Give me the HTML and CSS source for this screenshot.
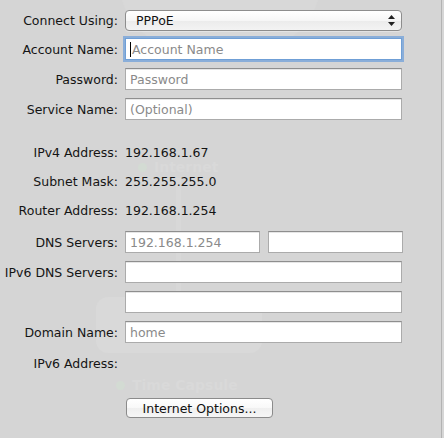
FILE: index.html
```html
<!DOCTYPE html>
<html>
<head>
<meta charset="utf-8">
<link rel="stylesheet" href="styles.css">
</head>
<body>
<div class="pane">
  <div class="ghost">
    <div class="ghost-disc"></div>
    <div class="ghost-line"></div>
    <div class="ghost-box"></div>
    <div class="ghost-text g1"><span class="gdot"></span>Internet</div>
    <div class="ghost-text g2"><span class="gdot"></span>Time Capsule</div>
  </div>

  <div class="form">
    <div class="row r-popup">
      <div class="label">Connect Using:</div>
      <div class="popup">
        <span class="popup-text">PPPoE</span>
        <svg class="arrows" width="7" height="11" viewBox="0 0 7 11"><path d="M3.5 0 L7 4 L0 4 Z" fill="#222"/><path d="M0 7 L7 7 L3.5 11 Z" fill="#222"/></svg>
      </div>
    </div>

    <div class="row r-first">
      <div class="label">Account Name:</div>
      <div class="field focus"><span class="caret"></span><span class="ph">Account Name</span></div>
    </div>
    <div class="row r-field">
      <div class="label">Password:</div>
      <div class="field"><span class="ph">Password</span></div>
    </div>
    <div class="row r-field">
      <div class="label">Service Name:</div>
      <div class="field"><span class="ph">(Optional)</span></div>
    </div>

    <div class="row r-static r-after-fields">
      <div class="label">IPv4 Address:</div>
      <div class="value">192.168.1.67</div>
    </div>
    <div class="row r-static">
      <div class="label">Subnet Mask:</div>
      <div class="value">255.255.255.0</div>
    </div>
    <div class="row r-static">
      <div class="label">Router Address:</div>
      <div class="value">192.168.1.254</div>
    </div>

    <div class="row r-dns">
      <div class="label">DNS Servers:</div>
      <div class="pair">
        <div class="field half"><span class="ph">192.168.1.254</span></div>
        <div class="field half"></div>
      </div>
    </div>
    <div class="row r-field">
      <div class="label">IPv6 DNS Servers:</div>
      <div class="field"></div>
    </div>
    <div class="row r-field">
      <div class="label"></div>
      <div class="field"></div>
    </div>
    <div class="row r-field">
      <div class="label">Domain Name:</div>
      <div class="field"><span class="ph">home</span></div>
    </div>

    <div class="row r-static r-ipv6">
      <div class="label">IPv6 Address:</div>
      <div class="value"></div>
    </div>

    <div class="row r-button">
      <div class="label"></div>
      <div class="button">Internet Options...</div>
    </div>
  </div>
</div>
<div class="edge"></div>
</body>
</html>
```
FILE: styles.css
```css
html, body {
  margin: 0;
  padding: 0;
  height: 100%;
}
body {
  display: flex;
  background: #d6d6d6;
  font-family: "DejaVu Sans", "Lucida Grande", sans-serif;
  font-size: 12.5px;
  color: #141414;
  overflow: hidden;
}
.pane {
  position: relative;
  width: 441px;
  height: 438px;
  background: #d5d5d5;
}
.edge {
  width: 1px;
  height: 438px;
  background: #b3b3b3;
}

/* faint decorative backdrop */
.ghost {
  position: absolute;
  inset: 0;
  pointer-events: none;
}
.ghost-disc {
  position: absolute;
  left: 120px;
  top: -90px;
  width: 200px;
  height: 150px;
  border-radius: 50%;
  background: #d8d8d8;
}
.ghost-line {
  position: absolute;
  left: 176px;
  top: 178px;
  width: 5px;
  height: 118px;
  background: #d8d8d8;
}
.ghost-box {
  position: absolute;
  left: 96px;
  top: 297px;
  width: 166px;
  height: 56px;
  border-radius: 12px;
  background: #d9d9d9;
}
.ghost-text {
  position: absolute;
  font-size: 14px;
  line-height: 14px;
  font-weight: bold;
  color: #d9d9d9;
  display: flex;
  align-items: center;
  gap: 7px;
}
.gdot {
  width: 9px;
  height: 9px;
  border-radius: 50%;
  background: #d3dbd3;
}
.g1 { left: 138px; top: 160px; }
.g2 { left: 116px; top: 378px; }

.form {
  position: relative;
  display: flex;
  flex-direction: column;
  padding-top: 10px;
}
.row {
  display: flex;
  align-items: center;
  gap: 7px;
  height: 22px;
}
.label {
  width: 118px;
  flex: none;
  text-align: right;
  white-space: nowrap;
}
.r-popup { height: 21px; }
.r-first { margin-top: 7px; }
.r-field { margin-top: 8px; }
.r-after-fields { margin-top: 21px; }
.r-static { height: 16px; }
.r-after-fields { margin-top: 24px; }
.r-static + .r-static { margin-top: 13px; }
.r-dns { margin-top: 13px; }
.r-ipv6 { margin-top: 12px; }
.r-button { margin-top: 27px; height: 20px; }

.popup {
  box-sizing: border-box;
  width: 277px;
  height: 21px;
  border: 1px solid #8d8d8d;
  border-radius: 4px;
  background: linear-gradient(#ffffff, #f6f6f6 50%, #ebebeb 51%, #f3f3f3);
  display: flex;
  align-items: center;
  justify-content: space-between;
  padding: 0 6px 0 10px;
  box-shadow: 0 1px 0 rgba(255,255,255,0.35);
}
.popup-text { color: #111; }
.arrows { display: block; }

.field {
  box-sizing: border-box;
  width: 277px;
  height: 22px;
  background: #fff;
  border: 1px solid #ababab;
  border-top-color: #8e8e8e;
  box-shadow: inset 0 1px 0 #e6e6e6;
  display: flex;
  align-items: center;
  padding-left: 4px;
  font-size: 12.5px;
}
.field.focus {
  border-color: #6f9fd6;
  box-shadow: 0 0 0 2px rgba(112, 160, 218, 0.75);
}
.caret {
  width: 1px;
  height: 15px;
  background: #000;
  margin-right: 1px;
}
.ph { color: #8a8a8a; }

.pair {
  display: flex;
  gap: 8px;
}
.field.half { width: 135px; }

.value { color: #141414; }

.button {
  box-sizing: border-box;
  margin-left: 1px;
  width: 147px;
  height: 20px;
  border: 1px solid #8b8b8b;
  border-radius: 4px;
  background: linear-gradient(#ffffff, #f8f8f8 50%, #efefef 51%, #f6f6f6);
  display: flex;
  align-items: center;
  justify-content: center;
  color: #111;
}
```
